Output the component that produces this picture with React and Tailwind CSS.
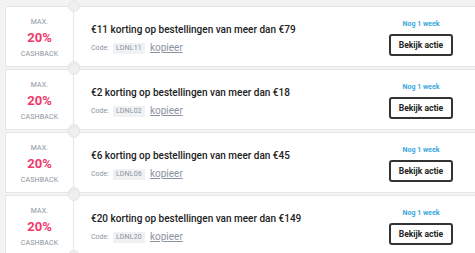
import React from "react";

const deals = [
  { title: "€11 korting op bestellingen van meer dan €79", code: "LDNL11" },
  { title: "€2 korting op bestellingen van meer dan €18", code: "LDNL02" },
  { title: "€6 korting op bestellingen van meer dan €45", code: "LDNL06" },
  { title: "€20 korting op bestellingen van meer dan €149", code: "LDNL20" },
];

function Card({ title, code }) {
  return (
    <div className="flex h-[61px] bg-white border border-r-0 border-[#e6e6e6]">
      <div className="w-[67px] flex flex-col items-center justify-center leading-none pt-[4px]">
        <div className="text-[7px] text-[#8a93a0] tracking-wide">MAX.</div>
        <div className="text-[13px] font-bold text-[#f0386b] mt-[5px]">20%</div>
        <div className="text-[7px] text-[#8a93a0] mt-[7px] tracking-wide">CASHBACK</div>
      </div>
      <div className="relative w-px bg-[#e6e6e6]">
        <div className="absolute left-1/2 -translate-x-1/2 -top-[7px] w-[12px] h-[12px] rounded-full bg-[#efefef] border border-[#e6e6e6]" />
        <div className="absolute left-1/2 -translate-x-1/2 -bottom-[7px] w-[12px] h-[12px] rounded-full bg-[#efefef] border border-[#e6e6e6]" />
      </div>
      <div className="flex-1 flex flex-col justify-center pl-[17px] pt-[5px]">
        <div className="text-[10px] font-medium text-[#222] leading-none">{title}</div>
        <div className="flex items-center mt-[8px] leading-none">
          <span className="text-[7px] text-[#8a93a0]">Code:</span>
          <span className="ml-[4px] bg-[#f0f1f3] px-[3px] py-[2px] text-[7px] text-[#8a93a0] tracking-wide">{code}</span>
          <span className="ml-[5px] text-[10px] text-[#8a93a0] underline">kopieer</span>
        </div>
      </div>
      <div className="w-[84px] flex flex-col items-center justify-center mr-[12px] pt-[4px]">
        <div className="text-[7px] font-bold text-[#3aa8e0] leading-none">Nog 1 week</div>
        <div className="mt-[6px] w-[64px] h-[22px] border-2 border-[#333] rounded-[3px] flex items-center justify-center text-[8.5px] font-bold text-[#222]">
          Bekijk actie
        </div>
      </div>
    </div>
  );
}

export default function App() {
  return (
    <div className="w-[475px] h-[253px] overflow-hidden bg-[#f3f3f3] pt-[6px] pl-[5px]" style={{ fontFamily: "Roboto, sans-serif" }}>
      <div className="flex flex-col gap-[2px]">
        {deals.map((d) => (
          <Card key={d.code} {...d} />
        ))}
      </div>
    </div>
  );
}
